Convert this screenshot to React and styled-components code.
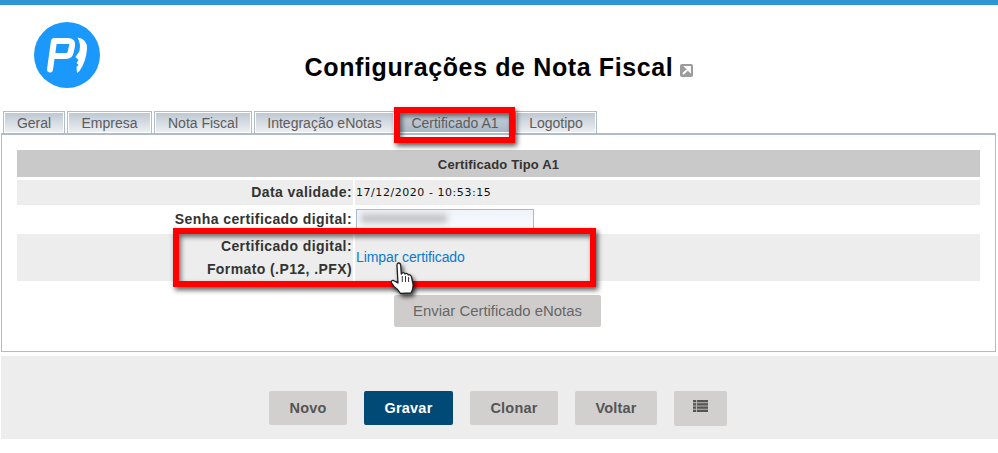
import React from "react";
import styled, { createGlobalStyle } from "styled-components";

const Global = createGlobalStyle`
  html, body { margin: 0; padding: 0; background: #fff; }
  body { font-family: "Liberation Sans", Arial, sans-serif; width: 998px; height: 453px; overflow: hidden; }
`;
const Page = styled.div`position: relative; width: 998px; height: 453px; overflow: hidden;`;
const TopBar = styled.div`height: 5px; background: #2e97d3;`;
const Header = styled.header`height: 106px; position: relative; display: flex; justify-content: center;`;
const LogoWrap = styled.div`position: absolute; left: 34px; top: 17px; width: 66px; height: 66px;`;
const Title = styled.h1`
  margin: 47px 0 0 0; font-size: 25px; line-height: 30px; font-weight: 700; color: #000;
  letter-spacing: .62px; display: flex; align-items: center; gap: 7px; height: 30px;
`;
const Tabs = styled.nav`display: flex; height: 22px; padding-left: 3px; gap: 2px;`;
const Tab = styled.div`
  box-sizing: border-box; width: ${p => p.$w}px; height: 22px; border: 1px solid #aebccc; border-bottom: 0;
  box-shadow: inset 0 0 0 1px #fff;
  background: ${p => p.$active ? "linear-gradient(#c9d2dc,#a9b7c6)" : "linear-gradient(#bcc6d1,#eef1f4)"};
  font-size: 14px; line-height: 23px; text-align: center; color: #5c5c5c;
`;
const Panel = styled.section`
  box-sizing: border-box; margin: 0 2px 0 1px; height: 219px; border: 1px solid #aebccc;
  border-top-width: 2px; padding: 15px 15px 0; background: #fff;
`;
const PanelHead = styled.div`
  height: 27px; background: #c9c9c9; color: #333; font-size: 13px; font-weight: 700; letter-spacing: .15px;
  line-height: 29px; text-align: center; margin-bottom: 3px;
`;
const Row = styled.div`
  display: grid; grid-template-columns: 336px 1fr; column-gap: 2px; height: ${p => p.$h}px;
  align-items: stretch;
`;
const Label = styled.div`
  background: ${p => p.$shade ? "#ededed" : "#fff"}; color: #333; text-align: right; font-size: 14px; font-weight: 700;
  letter-spacing: .41px; padding: ${p => p.$top || 0}px 1px 0 0; line-height: ${p => p.$lh || 25}px;
`;
const Value = styled.div`
  background: ${p => p.$shade ? "#ededed" : "#fff"}; display: flex; align-items: center; padding-left: 1px;
`;
const DateText = styled.span`font-family: "DejaVu Sans", sans-serif; font-size: 11px; color: #111; letter-spacing: .55px;`;
const FakeInput = styled.div`
  box-sizing: border-box; width: 178px; height: 27px; margin-top: 4px; align-self: flex-start; border: 1px solid #abb8cf;
  background: linear-gradient(#eef2fa,#fff); padding: 4px 0 0 4px; overflow: hidden;
`;
const Blurred = styled.span`
  display: block; width: 86px; height: 9px; background: #c2c2c2; filter: blur(3px);
`;
const CertLink = styled.a`color: #0a7ad1; font-size: 14px; text-decoration: none; letter-spacing: -.1px; margin-top: -1px;`;
const SendRow = styled.div`display: flex; padding: 14px 0 0 377px;`;
const Send = styled.button`
  width: 207px; height: 32px; border: 0; border-radius: 2px; background: #cfcdcb; color: #666;
  font: 14.9px "Liberation Sans", Arial, sans-serif; padding: 0;
`;
const Footer = styled.footer`
  box-sizing: border-box; height: 83px; margin: 4px 0 0 1px; background: #ededed; padding: 35px 0 0 268px;
  display: flex; gap: 17px; align-items: flex-start;
`;
const Btn = styled.button`
  width: ${p => p.$w}px; height: ${p => p.$h || 34}px; border: 0; border-radius: 2px; padding: 0;
  background: ${p => p.$primary ? "#004a75" : "#d2d0ce"}; color: ${p => p.$primary ? "#fff" : "#555"};
  font: 700 14.5px "Liberation Sans", Arial, sans-serif; letter-spacing: .2px;
  display: flex; align-items: center; justify-content: center;
`;
const Highlight = styled.div`
  position: absolute; box-sizing: border-box; left: ${p => p.$x}px; top: ${p => p.$y}px;
  width: ${p => p.$w}px; height: ${p => p.$h}px; border: 6px solid #fe0000;
  box-shadow: 2px 3px 5px rgba(0,0,0,.65), inset 2px 3px 5px rgba(0,0,0,.55);
`;
const Cursor = styled.svg`position: absolute; left: 390px; top: 262px; filter: drop-shadow(2px 3px 2px rgba(0,0,0,.7));`;

const Logo = () => (
  <svg width="66" height="66" viewBox="0 0 66 66">
    <circle cx="33" cy="33" r="33" fill="#1a98fb" />
    <path d="M16 47.5 L20 19 H34.5 Q39 19 38 24 L36.7 30 Q36 34 32 34 H19" fill="none" stroke="#fff" strokeWidth="6" strokeLinecap="round" strokeLinejoin="round" />
    <path d="M43.5 15.5 Q53.5 17 53 27 Q52 40 45.5 49 L43 51 L42.5 45 L44.5 43 L42.5 41 L44.5 38 L41.5 35 L45.5 29 Q47 21 43.5 15.5 Z" fill="#fff" />
  </svg>
);
const ExtIcon = () => (
  <svg width="13" height="13" viewBox="0 0 13 13" style={{ marginTop: 7 }}>
    <rect width="13" height="13" rx="2" fill="#9c9c9c" />
    <path d="M3 10 L9 4 M5.5 3 H10 V7.5 Z" stroke="#fff" strokeWidth="1.8" fill="#fff" />
  </svg>
);
const ListIcon = () => (
  <svg width="15" height="12" viewBox="0 0 15 12" style={{ marginTop: -6 }} fill="#555">
    <rect x="0" y="0" width="3" height="2.4" /><rect x="3.7" y="0" width="11.3" height="2.4" />
    <rect x="0" y="3.2" width="3" height="2.4" /><rect x="3.7" y="3.2" width="11.3" height="2.4" />
    <rect x="0" y="6.4" width="3" height="2.4" /><rect x="3.7" y="6.4" width="11.3" height="2.4" />
    <rect x="0" y="9.6" width="3" height="2.4" /><rect x="3.7" y="9.6" width="11.3" height="2.4" />
  </svg>
);
const Hand = () => (
  <Cursor width="26" height="34" viewBox="0 0 26 34">
    <path d="M8 21 L7 3.5 Q7 1 8.7 1 Q10.5 1 10.7 3.5 L11.3 12 L12.2 11 Q14 10 15 12 Q17 10.5 18.3 13 Q20.5 12 21.5 15 L23 22 Q23.5 27 21 31 L10.5 31.5 Q8 27 4 24.5 L1.5 21 Q1 18 3.5 18.5 Z" fill="#fff" stroke="#222" strokeWidth="1.3" strokeLinejoin="round" />
    <path d="M12.3 14 V20 M15.5 14 V20 M18.6 15 V20" stroke="#333" strokeWidth="1" />
  </Cursor>
);

const tabs = [["Geral", 62], ["Empresa", 85], ["Nota Fiscal", 98], ["Integração eNotas", 141], ["Certificado A1", 116], ["Logotipo", 82]];

export default function App() {
  return (
    <Page>
      <Global />
      <TopBar />
      <Header>
        <LogoWrap><Logo /></LogoWrap>
        <Title>Configurações de Nota Fiscal <ExtIcon /></Title>
      </Header>
      <Tabs>
        {tabs.map(([t, w], i) => <Tab key={t} $w={w} $active={i === 4}>{t}</Tab>)}
      </Tabs>
      <Panel>
        <PanelHead>Certificado Tipo A1</PanelHead>
        <Row $h={25}>
          <Label $shade>Data validade:</Label>
          <Value $shade><DateText>17/12/2020 - 10:53:15</DateText></Value>
        </Row>
        <Row $h={29}>
          <Label $lh={28}>Senha certificado digital:</Label>
          <Value><FakeInput><Blurred /></FakeInput></Value>
        </Row>
        <Row $h={47}>
          <Label $shade $lh={23} $top={1}>Certificado digital:<br />Formato (.P12, .PFX)</Label>
          <Value $shade><CertLink href="#">Limpar certificado</CertLink></Value>
        </Row>
        <SendRow><Send>Enviar Certificado eNotas</Send></SendRow>
      </Panel>
      <Footer>
        <Btn $w={78}>Novo</Btn>
        <Btn $w={89} $primary>Gravar</Btn>
        <Btn $w={88}>Clonar</Btn>
        <Btn $w={82}>Voltar</Btn>
        <Btn $w={53} $h={35}><ListIcon /></Btn>
      </Footer>
      <Highlight $x={394} $y={107} $w={121} $h={36} />
      <Highlight $x={173} $y={228} $w={423} $h={59} />
      <Hand />
    </Page>
  );
}
